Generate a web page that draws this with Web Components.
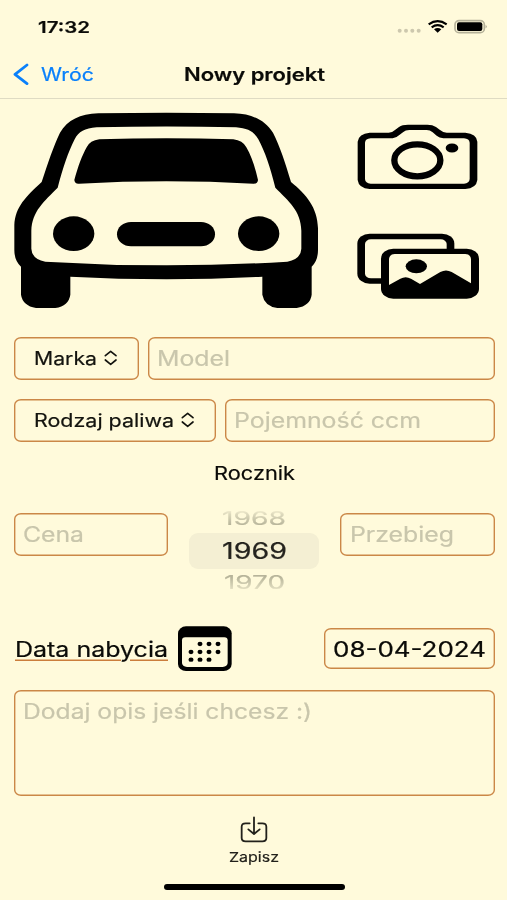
<!DOCTYPE html>
<html lang="pl">
<head>
<meta charset="utf-8">
<title>Nowy projekt</title>
<style>
html,body{margin:0;padding:0;background:#fffadb}
</style>
</head>
<body>
<project-screen></project-screen>
<script>
class ShadowBase extends HTMLElement {
  constructor(){ super(); this.attachShadow({mode:'open'}); }
  connectedCallback(){ this.shadowRoot.innerHTML = this.view(); this.ready && this.ready(); }
}

/* One line of type, expanded horizontally to the width given in "w". */
customElements.define('wide-text', class extends ShadowBase {
  view(){
    const w=this.getAttribute('w'), s=this.getAttribute('size')||18, f=this.getAttribute('weight')||400;
    return `<style>:host{display:block;width:${w}px;height:24px;flex:none;font:${f} ${s}px/24px Inter,"Noto Sans",sans-serif;white-space:nowrap}
    span{display:inline-block;vertical-align:top;transform-origin:0 50%;-webkit-text-stroke:.2px currentColor}</style><span>${this.getAttribute('label')}</span>`;
  }
  ready(){
    const s=this.shadowRoot.querySelector('span');
    s.style.transform=`scaleX(${this.getAttribute('w')/s.getBoundingClientRect().width})`;
  }
});

customElements.define('status-bar', class extends ShadowBase {
  view(){ return `<style>:host{display:flex;align-items:center;height:53px;padding:0 18px 0 38px;box-sizing:border-box;justify-content:space-between}svg{display:block}</style>
  <wide-text label="17:32" w="52" size="16.5" weight="600"></wide-text>
  <svg width="94" height="20" viewBox="0 0 282 60">
    <g fill="#cdc8ae"><circle cx="14" cy="41" r="6"/><circle cx="33" cy="41" r="6"/><circle cx="52" cy="41" r="6"/><circle cx="71" cy="41" r="6"/></g>
    <g fill="none" stroke="#000" stroke-width="6.5"><path d="M101 22Q128 3 155 22"/><path d="M110 31Q128 18 146 31"/></g>
    <path d="M117 37Q128 29 139 37L128 47Z"/>
    <rect x="180" y="11" width="88" height="36" rx="12" fill="#fffadb" stroke="#b5b199" stroke-width="5"/>
    <rect x="186" y="16" width="76" height="26" rx="6"/><path d="M272 24q6 5 0 10z" fill="#97937f"/>
  </svg>`; }
});

customElements.define('nav-bar', class extends ShadowBase {
  view(){ return `<style>:host{display:grid;grid-template-columns:184px 1fr;align-items:center;height:46px;padding-bottom:3px;box-sizing:border-box;border-bottom:1px solid #dfdbc3}
  .back{display:flex;align-items:center;color:#0a80fb;padding-left:13px;gap:12px}svg{display:block}</style>
  <div class="back"><svg width="16" height="22" viewBox="0 0 48 66"><path d="M42 6L6 34L42 62" fill="none" stroke="#0a80fb" stroke-width="8.5" stroke-linecap="round" stroke-linejoin="round"/></svg>
  <wide-text label="Wróć" w="53" size="18.2"></wide-text></div>
  <wide-text label="Nowy projekt" w="141" size="18.2" weight="600"></wide-text>`; }
});

customElements.define('photo-panel', class extends ShadowBase {
  view(){ return `<style>:host{display:grid;grid-template-columns:330px 160px;column-gap:10px;height:220px;padding-top:1px}
  svg{display:block}.side{display:grid;grid-template-rows:100px 100px;row-gap:10px;padding-top:10px}</style>
  <svg width="330" height="220" viewBox="0 0 990 660">
    <path d="M63 500Q43 482 43 450V375C46 320 78 290 125 246C145 185 160 140 180 98C203 60 240 42 295 40Q500 36 702 40C757 42 794 60 819 98C840 140 855 185 873 246C920 285 952 322 954 385V450Q954 482 935 500V584Q931 617 890 624H832Q793 618 787 584V530Q500 545 211 530V584Q206 618 166 624H108Q68 617 63 584Z"/>
    <path fill="#fffadb" d="M94 446V392C96 333 132 305 173 263C190 200 204 158 224 118C236 95 254 85 290 82Q500 77 708 82C744 85 762 95 775 118C796 158 810 200 826 263C865 303 903 332 904 392V446Q902 478 862 485Q500 507 136 485Q96 478 94 446Z"/>
    <path d="M223 240C234 199 247 165 260 142Q270 121 298 118Q500 111 700 118Q728 121 739 142C754 168 765 200 774 240Q773 252 760 251Q500 237 237 251Q224 252 223 240Z"/>
    <ellipse cx="221" cy="401" rx="62" ry="52"/><ellipse cx="776" cy="401" rx="62" ry="52"/>
    <rect x="351" y="366" width="294" height="73" rx="42" ry="36.5"/>
  </svg>
  <div class="side">
    <svg width="160" height="100" viewBox="0 0 480 300">
      <path d="M53 95Q56 71 89 68H146Q158 67 166 59L177 51Q186 44 204 44H262Q278 44 288 51L299 59Q310 68 320 68H376Q410 71 412 95V210Q409 235 376 237H89Q56 235 53 210Z"/>
      <path fill="#fffadb" d="M75 98Q76 86 92 85H158Q170 83 178 75L190 66Q196 60 208 60H260Q270 60 278 67L290 77Q298 84 310 85H372Q388 86 389 98V207Q388 220 372 221H92Q76 220 75 207Z"/>
      <ellipse cx="232" cy="151" rx="69" ry="48" fill="none" stroke="#000" stroke-width="19"/>
      <ellipse cx="336" cy="114" rx="19" ry="13.5"/>
    </svg>
    <svg width="160" height="100" viewBox="0 0 480 300">
      <rect x="52" y="41" width="291" height="150" rx="37" ry="30"/>
      <rect x="75" y="58" width="245" height="117" rx="18" ry="14" fill="#fffadb"/>
      <rect x="123" y="86" width="294" height="150" rx="37" ry="30"/>
      <path fill="#fffadb" d="M147 117Q148 103 164 102H376Q392 103 393 117V190L335 156Q318 147 301 156L240 192L213 176Q197 167 181 176L147 195Z"/>
      <ellipse cx="229" cy="139" rx="32" ry="21"/>
    </svg>
  </div>`; }
});

/* Rounded outlined box; slotted content is centred vertically. */
customElements.define('outline-box', class extends ShadowBase {
  view(){ return `<style>:host{display:flex;align-items:center;box-sizing:border-box;box-shadow:inset 0 0 0 1.4px #cb8747;border-radius:7px/6px;height:43px;padding-left:9.5px;color:#c9c6ac}
  :host([menu]){color:#14140f;padding-left:20px;gap:7px}:host([strong]){color:#0b0b08}
  :host([tall]){align-items:flex-start;padding-top:9px}</style>
  <slot></slot>${this.hasAttribute('menu')?'<svg width="14" height="16" viewBox="0 0 42 48"><path d="M4 17L20 4L36 17M4 30L20 43L36 30" fill="none" stroke="#14140f" stroke-width="5" stroke-linecap="round" stroke-linejoin="round"/></svg>':''}`; }
});

customElements.define('year-picker', class extends ShadowBase {
  view(){ return `<style>:host{display:grid;grid-template-rows:28px 36px 28px;justify-items:center;align-items:center;width:130px}
  .on{display:flex;align-items:center;justify-content:center;width:130px;height:36px;border-radius:9px;background:#f4efd3;color:#24231e}
  .up,.down{color:#b7b49a;height:24px}
  .up{-webkit-mask:linear-gradient(transparent 5%,#0007 30%,#000 75%)}
  .down{-webkit-mask:linear-gradient(#000 25%,#0007 70%,transparent 95%)}</style>
  <div class="up"><wide-text label="1968" w="64" size="19"></wide-text></div>
  <div class="on"><wide-text label="1969" w="65" size="22.4"></wide-text></div>
  <div class="down"><wide-text label="1970" w="61" size="19"></wide-text></div>`; }
});

customElements.define('date-row', class extends ShadowBase {
  view(){
    const dots=[[66,54],[93,54],[120,54],[39,78],[66,78],[93,78],[120,78],[39,101],[66,101],[93,101]]
      .map(([x,y])=>`<ellipse cx="${x}" cy="${y}" rx="7.5" ry="6.5"/>`).join('');
    return `<style>:host{display:flex;align-items:center;height:46px}
  .label{width:153px;height:24px;margin-right:10.5px;position:relative}
  .label svg{position:absolute;left:0;top:22px}
  svg{display:block}outline-box{width:171px;height:41px;margin-left:auto;padding-left:9px}</style>
  <div class="label"><wide-text label="Data nabycia" w="153" size="21.3"></wide-text>
  <svg width="153" height="3" viewBox="0 0 153 3"><path d="M0 1.3H106M115 1.3H153" stroke="#cb7d3c" stroke-width="1.6"/></svg></div>
  <svg width="54" height="46" viewBox="0 0 162 138"><rect y="1" width="161" height="134" rx="24" ry="21"/><path fill="#fffadb" d="M12 43Q12 34 22 34H139Q149 34 149 43V111Q148 122 134 123H27Q13 122 12 111Z"/>${dots}</svg>
  <outline-box strong><wide-text label="08-04-2024" w="153" size="21.3"></wide-text></outline-box>`; }
});

customElements.define('save-button', class extends ShadowBase {
  view(){ return `<style>:host{display:flex;flex-direction:column;align-items:center;color:#22211b}svg{display:block}wide-text{margin-top:1px}</style>
  <svg width="30" height="30" viewBox="0 0 90 90"><g fill="none" stroke="#22211b" stroke-width="5.4" stroke-linecap="round" stroke-linejoin="round"><path d="M32 28H20Q8 28 8 38V72Q8 82 20 82H70Q82 82 82 72V38Q82 28 70 28H58"/><path d="M45 10V59M28 46L45 60L62 46"/></g></svg>
  <wide-text label="Zapisz" w="50" size="13.6"></wide-text>`; }
});

customElements.define('project-screen', class extends ShadowBase {
  view(){ return `<style>
  :host{display:flex;flex-direction:column;width:507px;height:900px;overflow:hidden;background:#fffadb;color:#0b0b08}
  .form{display:flex;flex-direction:column;padding:16.5px 12.5px 0 13.5px}
  .row{display:flex;gap:9px}.row+.row{margin-top:19px}
  .grow{flex:1}
  .head{display:flex;justify-content:center;margin-top:19.5px;padding-left:0}
  .years{display:grid;grid-template-columns:154.5px 130px 154.5px;justify-content:space-between;align-items:start;margin-top:20px}
  .years outline-box{margin-top:7.5px}
  date-row{margin:28.5px 0 0 1px}
  date-row,.note{flex:none}
  .note{height:106px;margin-top:18px}
  save-button{margin-top:18px}
  .home{width:181px;height:6px;border-radius:3px;background:#000;margin:15px auto 0;position:relative;left:.5px}
  </style>
  <status-bar></status-bar><nav-bar></nav-bar><photo-panel></photo-panel>
  <div class="form">
    <div class="row"><outline-box menu style="width:125px"><wide-text label="Marka" w="63" size="18.2"></wide-text></outline-box>
      <outline-box class="grow"><wide-text label="Model" w="73" size="21.3"></wide-text></outline-box></div>
    <div class="row"><outline-box menu style="width:202px"><wide-text label="Rodzaj paliwa" w="140" size="18.2"></wide-text></outline-box>
      <outline-box class="grow"><wide-text label="Pojemność ccm" w="187" size="21.3"></wide-text></outline-box></div>
    <div class="head"><wide-text label="Rocznik" w="81" size="18.6"></wide-text></div>
    <div class="years"><outline-box><wide-text label="Cena" w="61" size="21.3"></wide-text></outline-box>
      <year-picker></year-picker>
      <outline-box><wide-text label="Przebieg" w="104" size="21.3"></wide-text></outline-box></div>
    <date-row></date-row>
    <outline-box tall class="note"><wide-text label="Dodaj opis jeśli chcesz :)" w="289" size="21.3"></wide-text></outline-box>
  </div>
  <save-button></save-button>
  <div class="home"></div>`; }
});
</script>
</body>
</html>
